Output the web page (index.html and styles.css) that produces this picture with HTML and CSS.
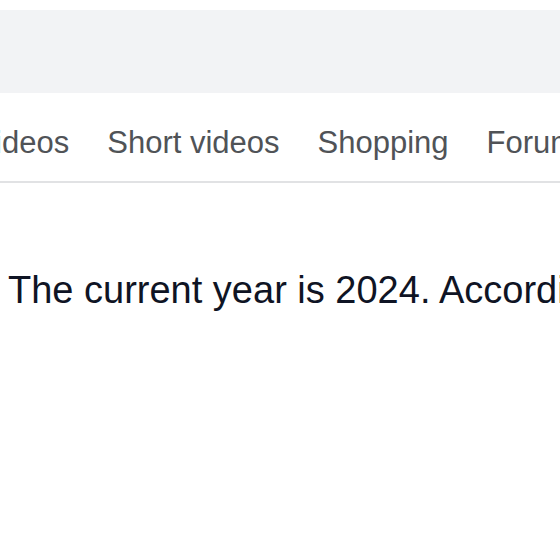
FILE: index.html
```html
<!DOCTYPE html>
<html lang="en">
<head>
<meta charset="utf-8">
<title>Search</title>
<link rel="stylesheet" href="styles.css">
</head>
<body>
<div class="search-bar"></div>
<nav class="tabs">
  <span class="tab">Videos</span>
  <span class="tab">Short videos</span>
  <span class="tab">Shopping</span>
  <span class="tab">Forums</span>
</nav>
<main class="answer">
  <p class="answer-text">The current year is 2024. According</p>
</main>
</body>
</html>
```
FILE: styles.css
```css
html, body {
  margin: 0;
  padding: 0;
  background: #ffffff;
  overflow: hidden;
}
body {
  width: 560px;
  height: 560px;
  font-family: "Liberation Sans", Arial, Helvetica, sans-serif;
}
.search-bar {
  margin-top: 10px;
  height: 83px;
  background: #f2f3f5;
}
.tabs {
  display: flex;
  gap: 38px;
  padding: 33px 0 21px 0;
  border-bottom: 2px solid #e1e2e4;
  white-space: nowrap;
  overflow: hidden;
}
.tab {
  flex: none;
  font-size: 31px;
  line-height: 34px;
  color: #505357;
}
.tab:first-child {
  margin-left: -25px;
}
.answer {
  padding: 85px 0 0 8px;
}
.answer-text {
  margin: 0;
  font-size: 38px;
  line-height: 44px;
  color: #0f1424;
  white-space: nowrap;
}
```
